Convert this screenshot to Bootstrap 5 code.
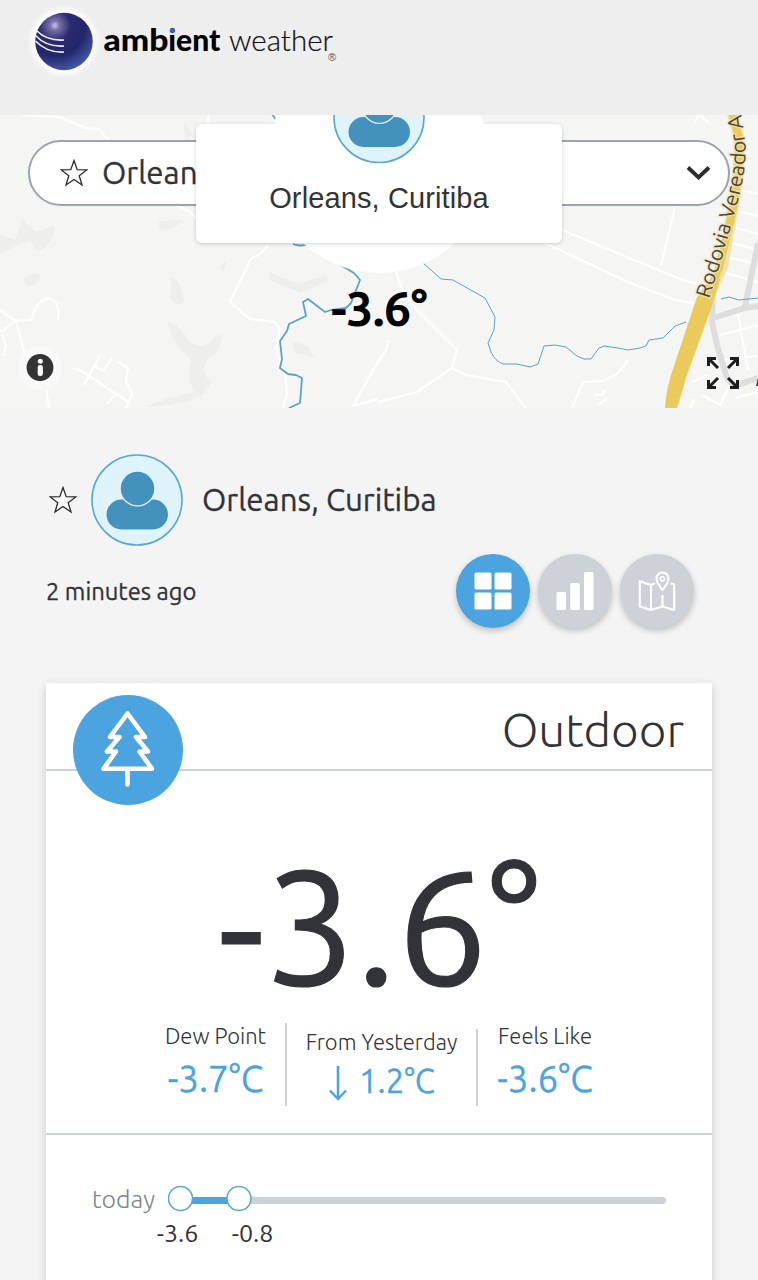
<!DOCTYPE html>
<html lang="en">
  <head>
    <meta charset="UTF-8" />
    <meta name="viewport" content="width=device-width, initial-scale=1.0" />
    <title>Ambient Weather</title>

    <link
      href="https://cdn.jsdelivr.net/npm/bootstrap@5.3.3/dist/css/bootstrap.min.css"
      rel="stylesheet"
    />
    <script src="https://cdn.jsdelivr.net/npm/bootstrap@5.3.3/dist/js/bootstrap.bundle.min.js"></script>
    <style>
      body {
        font-family: Ubuntu, "Noto Sans", sans-serif;
        background: #f4f4f4;
        color: #323338;
        height: 1280px;
        overflow: hidden;
      }
      svg { display: block; flex-shrink: 0; }
      .top-bar { height: 115px; background: #eee; }

      /* map */
      .map-area { height: 293px; background: #f5f5f4; }
      .map-canvas { left: 0; top: 0; }
      .place-select {
        margin: 25px 28px 0;
        height: 66px;
        border: 2px solid #9ba3af;
        border-radius: 33px;
        padding: 0 17px 0 30px;
        font-size: 31.3px;
        line-height: 58px;
      }
      .place-select span { margin: 0 auto 1px 14px; }
      .place-select span, .station-name, .updated, .fact-value { -webkit-text-stroke: .3px; }
      .marker-box {
        left: 196px;
        top: 9px;
        width: 366px;
        height: 119px;
        border-radius: 6px;
        box-shadow: 0 1px 4px rgba(0, 0, 0, .18);
      }
      .marker-art { left: 262px; top: 0; }
      .marker-name {
        left: 196px;
        width: 366px;
        top: 63px;
        font: 29px/40px "Liberation Sans", Arial, sans-serif;
        letter-spacing: .12px;
      }
      .marker-temp {
        left: 331px;
        top: 163px;
        font-size: 48px;
        line-height: 60px;
        font-weight: 600;
        color: #000;
        letter-spacing: -.5px;
        white-space: nowrap;
      }
      .map-info { left: 18px; top: 231px; }
      .map-expand { left: 706px; top: 241px; }

      /* station */
      .station { padding: 46px 64px 0 46px; }
      .station-row { height: 92px; }
      .star-toggle { margin-left: 3px; }
      .station-row .avatar { margin-left: 14px; }
      .station-name { font-size: 31.3px; line-height: 44px; margin: 0 0 1px 19px; }
      .updated { font-size: 23.8px; padding-top: 2px; }
      .view-btn {
        width: 74px;
        height: 74px;
        background: #cdd2d9;
        box-shadow: 0 3px 6px rgba(0, 0, 0, .22);
      }
      .view-btn.current { background: #4ba3e0; }

      /* outdoor tile */
      .tile {
        margin: 55px 46px 0;
        height: 640px;
        box-shadow: 0 3px 9px rgba(0, 0, 0, .17);
      }
      .tile-head { height: 88px; border-bottom: 2px solid #cdd2d8; padding: 12px 28px 0 27px; }
      .tile-title { font-size: 47.6px; font-weight: 300; line-height: 70px; }
      .reading {
        padding-top: 73px;
        height: 232px;
        font-size: 162.5px;
        line-height: 162px;
        -webkit-text-stroke: 1.2px;
      }
      .facts { height: 132px; border-bottom: 2px solid #cdd2d8; }
      .fact { margin-top: 20px; height: 83px; border-right: 2px solid #cdd2d8; }
      .fact-mid { margin-top: 26px; height: 77px; }
      .fact-label { font-size: 22px; line-height: 26px; font-weight: 300; white-space: nowrap; }
      .fact-value { font-size: 36.8px; line-height: 44px; margin-top: 8px; color: #4ba3e0; white-space: nowrap; }
      .fact-mid .fact-value { font-size: 32.8px; line-height: 40px; margin-top: 6px; }
      .fact-arrow { margin: 5px 11px 0 0; }
      .range { padding: 45px 46px 0; }
      .range-label { font-size: 25px; line-height: 36px; padding-top: 1px; font-weight: 300; color: #7b8490; width: 76px; }
      .range-marks { margin-left: 48px; font-size: 25px; line-height: 32px; }
      .range-marks span { width: 75px; text-align: center; }
    </style>
  </head>

  <body>
    <!-- shared shapes -->
    <svg width="0" height="0" class="position-absolute">
      <defs>
        <symbol id="star" viewBox="0 0 28 28">
          <path d="M14 1.5 L17.2 10.7 L26.8 10.9 L19.2 16.7 L22 26 L14 20.5 L6 26 L8.8 16.7 L1.2 10.9 L10.8 10.7 Z" fill="#fff" fill-opacity=".5" stroke="#2b2b2e" stroke-width="1.3" />
        </symbol>
        <symbol id="person" viewBox="0 0 92 92">
          <circle cx="46" cy="46" r="45" fill="#dff3fa" stroke="#5aa7d6" stroke-width="1.6" />
          <rect x="15.5" y="45.5" width="61.5" height="30" rx="15" fill="#4491bd" />
          <circle cx="46.5" cy="34.5" r="18" fill="#dff3fa" />
          <circle cx="46.5" cy="34.5" r="16.7" fill="#4491bd" />
        </symbol>
      </defs>
    </svg>

    <header class="top-bar">
      <svg width="380" height="100" viewBox="0 0 380 100">
        <defs>
          <radialGradient id="ball" cx=".34" cy=".22" r=".85">
            <stop offset="0" stop-color="#c9c5e2" />
            <stop offset=".1" stop-color="#7770ab" />
            <stop offset=".32" stop-color="#2c2a70" />
            <stop offset=".62" stop-color="#23266a" />
            <stop offset="1" stop-color="#4560b4" />
          </radialGradient>
          <radialGradient id="halo">
            <stop offset=".78" stop-color="#fff" />
            <stop offset="1" stop-color="#fff" stop-opacity="0" />
          </radialGradient>
        </defs>
        <circle cx="64" cy="41.5" r="37" fill="url(#halo)" />
        <circle cx="64" cy="41.5" r="28.8" fill="url(#ball)" />
        <g fill="none" stroke="#eef0fa" stroke-width="1.6">
          <path d="M37 31 Q47 41 64 40" />
          <path d="M35.5 35.5 Q46 47 64 46" />
          <path d="M35.5 41 Q47 53 64 52" />
        </g>
        <text y="50.5" font-family="Lato" font-weight="900" font-size="29.5" fill="#000"><tspan x="103.5" textLength="65" lengthAdjust="spacingAndGlyphs">amb</tspan><tspan x="168.3" textLength="52" lengthAdjust="spacingAndGlyphs">ient</tspan></text>
        <circle cx="172.4" cy="30.3" r="4.3" fill="#eee" />
        <circle cx="172.4" cy="30.5" r="2.7" fill="#3b5fb4" />
        <text x="229" y="50.5" font-family="Lato" font-weight="300" font-size="29" fill="#111" stroke="#111" stroke-width=".2" textLength="104" lengthAdjust="spacingAndGlyphs">weather</text>
        <text x="328" y="60.5" font-family="Liberation Sans" font-size="11" fill="#555">®</text>
      </svg>
    </header>

    <section class="map-area position-relative overflow-hidden">
      <svg class="map-canvas position-absolute" width="758" height="293" viewBox="0 115 758 293">
        <!-- terrain -->
        <g fill="#eeeeed">
          <path d="M0 235 L15 240 L22 220 L36 232 L55 226 Q53 245 38 251 L30 240 L16 246 L0 254Z" />
          <path d="M23 280 Q30 270 41 275 Q38 286 28 286Z M158 221 L183 220 Q172 232 160 229Z M171 277 Q182 283 184 300 Q180 310 170 298Z" />
          <path d="M167 320 Q180 326 190 342 Q206 352 215 336 L223 335 Q220 352 207 360 Q200 374 212 382 L202 395 Q185 405 146 407 Q165 398 194 392 Q186 375 191 360 Q172 345 167 320Z" />
          <path d="M269 271 Q285 280 298 283 Q312 280 326 275 L328 280 Q312 289 300 293 Q285 286 271 281Z M292 341 L308 346 L314 357 L295 353Z M220 266 L227 260 L224 271Z M184 122 L193 135 L185 140Z" />
        </g>
        <!-- small streets -->
        <g fill="none" stroke="#fff" stroke-width="2.2" stroke-linejoin="round">
          <path d="M22 115 L60 117 L85 128 L98 129 L110 142 L145 190 L190 212 L198 220" />
          <path d="M0 310 L16 321 L31 320 Q37 300 49 298 Q61 302 58 320 M16 321 L0 332 M16 321 L25 355 L44 374 L49 408 M2 334 L6 346 L3 356" />
          <path d="M73 368 L80 370 L128 402 M84 385 L100 355 M94 366 L103 371 L112 358 M117 361 L128 368 L126 382 L132 394 L126 408 M107 404 L117 392" />
          <path d="M268 245 L260 254 L251 259 L230 302 L250 319 L275 322 L280 330 L276 350 L286 378 L287 395 L283 408" />
          <path d="M395 268 L402 290 L416 309 L457 350 L452 368 L417 392 L378 402 M452 368 L466 375 L506 382 L526 408" />
          <path d="M380 358 L353 406 L378 399 M389 340 L386 350 L372 372 M208 114 L209 135" />
          <path d="M562 230 L600 246 L680 279 L700 285 M545 243 L630 283 L675 300 L700 304 M675 207 L661 266" />
          <path d="M572 408 L583 382 L603 381 L618 373 L628 360 M594 394 Q603 398 605 390 M598 405 L607 398 M694 123 L700 114 L708 123" />
          <path d="M740 190 L758 194 M733 210 L758 216 M730 226 L758 234 M728 242 L758 250 M726 257 L758 264 M722 272 L758 282 M738 314 L748 370 M720 335 L758 325 M722 360 L758 356 M692 382 L708 375 M690 408 L694 399 M702 395 L720 405 L730 385 M735 398 L758 392" />
        </g>
        <!-- side roads -->
        <g fill="none" stroke="#dededf" stroke-width="6">
          <path d="M758 243 L745 307 M713 318 L745 308 L758 306 M713 290 L712 322 L717 345 L727 378 L734 386 L758 378" />
        </g>
        <!-- rivers -->
        <g fill="none" stroke="#5aa3c9" stroke-linejoin="round">
          <path stroke-width="1.8" d="M272 114 L277 121 M293 244 Q300 247 309 244 M337 263 L354 273 L360 280 L351 303 L346 308 L331 310 L325 312 L308 299 L303 302 L306 316 L289 324 L287 331 L280 341 L282 359 L280 368 L288 374 L296 375 L302 378 L300 403 L289 408" />
          <path stroke-width="1" d="M422 262 L441 279 L453 280 L485 298 L495 317 L494 330 L488 343 L491 352 Q495 361 503 364 L517 364 L530 367 L538 364 L544 346 L555 345 L566 347 L577 356 L584 359 L591 359 L599 348 L604 346 L618 348 L628 350 L640 348 L646 346 L649 340 L663 338 L675 326 L686 322 M721 299 L729 297 L739 300 L758 298" />
        </g>
        <!-- highway -->
        <path d="M732 112 L739 138 Q740 180 731 218 L723 265 L703 309 L676 378 L671 408" fill="none" stroke="#f3e2ad" stroke-width="11" />
        <path d="M732 112 L739 138 Q740 180 731 218 L719 268 L706 300" fill="none" stroke="#ebca5c" stroke-width="8" />
        <path d="M713 275 L720 279 L712 306 L687 375 L677 408 L665 408 Q666 388 674 366 L697 297Z" fill="#ebca5c" />
        <path id="road-line" d="M709 299 L722 258 L736 208 Q748 165 745 140 L739 100" fill="none" />
        <text font-size="20.5" font-family="Ubuntu, Noto Sans, sans-serif" fill="#494642" stroke="#f5e6b8" stroke-width="3" stroke-opacity=".6" paint-order="stroke">
          <textPath href="#road-line" textLength="190" lengthAdjust="spacingAndGlyphs">Rodovia Vereador A</textPath>
        </text>
        <path d="M758 378 L756 386 H758Z" fill="#333" />
      </svg>

      <div class="place-select bg-white d-flex align-items-center position-relative">
        <svg width="28" height="28"><use href="#star" /></svg>
        <span>Orleans, Curitiba</span>
        <svg width="26" height="16" viewBox="0 0 26 16">
          <path d="M3 2.500 L13.500 12.500 L24 2.500" fill="none" stroke="#2b2b2e" stroke-width="3.8" />
        </svg>
      </div>

      <!-- station marker -->
      <svg class="marker-art position-absolute" width="234" height="170" viewBox="262 115 234 170">
        <circle cx="379" cy="161" r="112" fill="#fff" />
      </svg>
      <div class="marker-box bg-white position-absolute"></div>
      <svg class="marker-art position-absolute" width="234" height="60" viewBox="262 115 234 60">
        <path d="M278 115 H480 L483 124 L483 150 H275 Z" fill="#fff" />
        <use href="#person" x="333" y="71.5" width="92" height="92" />
      </svg>
      <div class="marker-name position-absolute text-center">Orleans, Curitiba</div>
      <div class="marker-temp position-absolute">-3.6°</div>

      <svg class="map-info position-absolute" width="44" height="44" viewBox="0 0 44 44">
        <circle cx="22" cy="22" r="22" fill="#f9f9f9" />
        <circle cx="22" cy="21.5" r="13.4" fill="#333" />
        <circle cx="22.3" cy="15.3" r="2.5" fill="#fff" />
        <rect x="19.7" y="19" width="5.2" height="11" rx="2.3" fill="#fff" />
      </svg>
      <svg class="map-expand position-absolute" width="34" height="34" viewBox="0 0 34 34">
        <g fill="none" stroke="#1d1d1f" stroke-width="3">
          <path d="M2.5 10 V2.5 H10 M2.5 2.5 L12 12" />
          <path d="M24 2.5 H31.5 V10 M31.5 2.5 L22 12" />
          <path d="M2.5 24 V31.5 H10 M2.5 31.5 L12 22" />
          <path d="M31.5 24 V31.5 H24 M31.5 31.5 L22 22" />
        </g>
      </svg>
    </section>

    <section class="station">
      <div class="station-row d-flex align-items-center">
        <svg width="28" height="28" class="star-toggle"><use href="#star" /></svg>
        <svg width="92" height="92" class="avatar"><use href="#person" /></svg>
        <div class="station-name">Orleans, Curitiba</div>
      </div>
      <div class="d-flex align-items-center justify-content-between mt-2">
        <div class="updated">2 minutes ago</div>
        <div class="d-flex gap-2">
          <button type="button" class="view-btn current btn rounded-circle border-0 p-0 d-flex align-items-center justify-content-center">
            <svg width="38" height="38" viewBox="0 0 38 38" fill="#fff">
              <rect x=".5" y=".5" width="17" height="17" rx="1.5" />
              <rect x="20.5" y=".5" width="17" height="17" rx="1.5" />
              <rect x=".5" y="20.5" width="17" height="17" rx="1.5" />
              <rect x="20.5" y="20.5" width="17" height="17" rx="1.5" />
            </svg>
          </button>
          <button type="button" class="view-btn btn rounded-circle border-0 p-0 d-flex align-items-center justify-content-center">
            <svg width="38" height="38" viewBox="0 0 38 38" fill="#fff">
              <rect x=".5" y="20" width="9.5" height="18" rx="1.5" />
              <rect x="14.3" y="11" width="9.5" height="27" rx="1.5" />
              <rect x="28" y="0" width="9.5" height="38" rx="1.5" />
            </svg>
          </button>
          <button type="button" class="view-btn btn rounded-circle border-0 p-0 d-flex align-items-center justify-content-center">
            <svg width="38" height="40" viewBox="0 0 38 40" fill="none" stroke="#fff" stroke-width="2.1" stroke-linejoin="round">
              <path d="M17 12.3 L13 14 L1.8 10.2 V35.5 L13 39 L24.5 35.5 L36.2 39 V13.5 L32.5 12.3 M13 14 V39 M24.5 35.5 V24" />
              <path d="M24.5 19 Q18.5 11.5 18.5 7.5 A6 6 0 0 1 30.5 7.5 Q30.5 11.5 24.5 19Z" />
              <circle cx="24.5" cy="7.8" r="2.1" stroke-width="1.5" />
            </svg>
          </button>
        </div>
      </div>
    </section>

    <section class="tile bg-white">
      <div class="tile-head d-flex justify-content-between">
        <svg width="110" height="110" viewBox="0 0 110 110" class="position-relative">
          <circle cx="55" cy="55" r="55" fill="#4ba3e0" />
          <path d="M54.5 18.5 L37 42 H46.5 L34 56.5 H43 L30.5 73.8 H79 L66.5 56.5 H75 L63 42 H72 Z M54.5 73.8 V89.5" fill="none" stroke="#fff" stroke-width="4.6" stroke-linejoin="round" stroke-linecap="round" />
        </svg>
        <div class="tile-title">Outdoor</div>
      </div>
      <div class="reading text-center">-3.6°</div>
      <div class="facts d-flex justify-content-center">
        <div class="fact text-center" style="width: 141px">
          <div class="fact-label">Dew Point</div>
          <div class="fact-value">-3.7°C</div>
        </div>
        <div class="fact fact-mid text-center" style="width: 191px">
          <div class="fact-label">From Yesterday</div>
          <div class="fact-value d-flex justify-content-center">
            <svg width="20" height="38" viewBox="0 0 20 38" class="fact-arrow">
              <path d="M10 0 V33 M2 24.5 L10 33 L18 24.5" fill="none" stroke="#4ba3e0" stroke-width="2.5" />
            </svg>
            1.2°C
          </div>
        </div>
        <div class="fact border-0 text-center" style="width: 134px">
          <div class="fact-label">Feels Like</div>
          <div class="fact-value">-3.6°C</div>
        </div>
      </div>
      <div class="range">
        <div class="d-flex align-items-center">
          <div class="range-label">today</div>
          <svg width="498" height="36" viewBox="0 0 498 36">
            <rect x="12" y="16" width="486" height="7" rx="3.5" fill="#cdd2d9" />
            <rect x="12" y="16" width="59" height="7" fill="#4ba3e0" />
            <g fill="#fff" stroke="#5aa7d6" stroke-width="1.6">
              <circle cx="12.5" cy="17.5" r="12" />
              <circle cx="71" cy="17.5" r="12" />
            </g>
          </svg>
        </div>
        <div class="range-marks d-flex">
          <span>-3.6</span>
          <span>-0.8</span>
        </div>
      </div>
    </section>
  </body>
</html>
